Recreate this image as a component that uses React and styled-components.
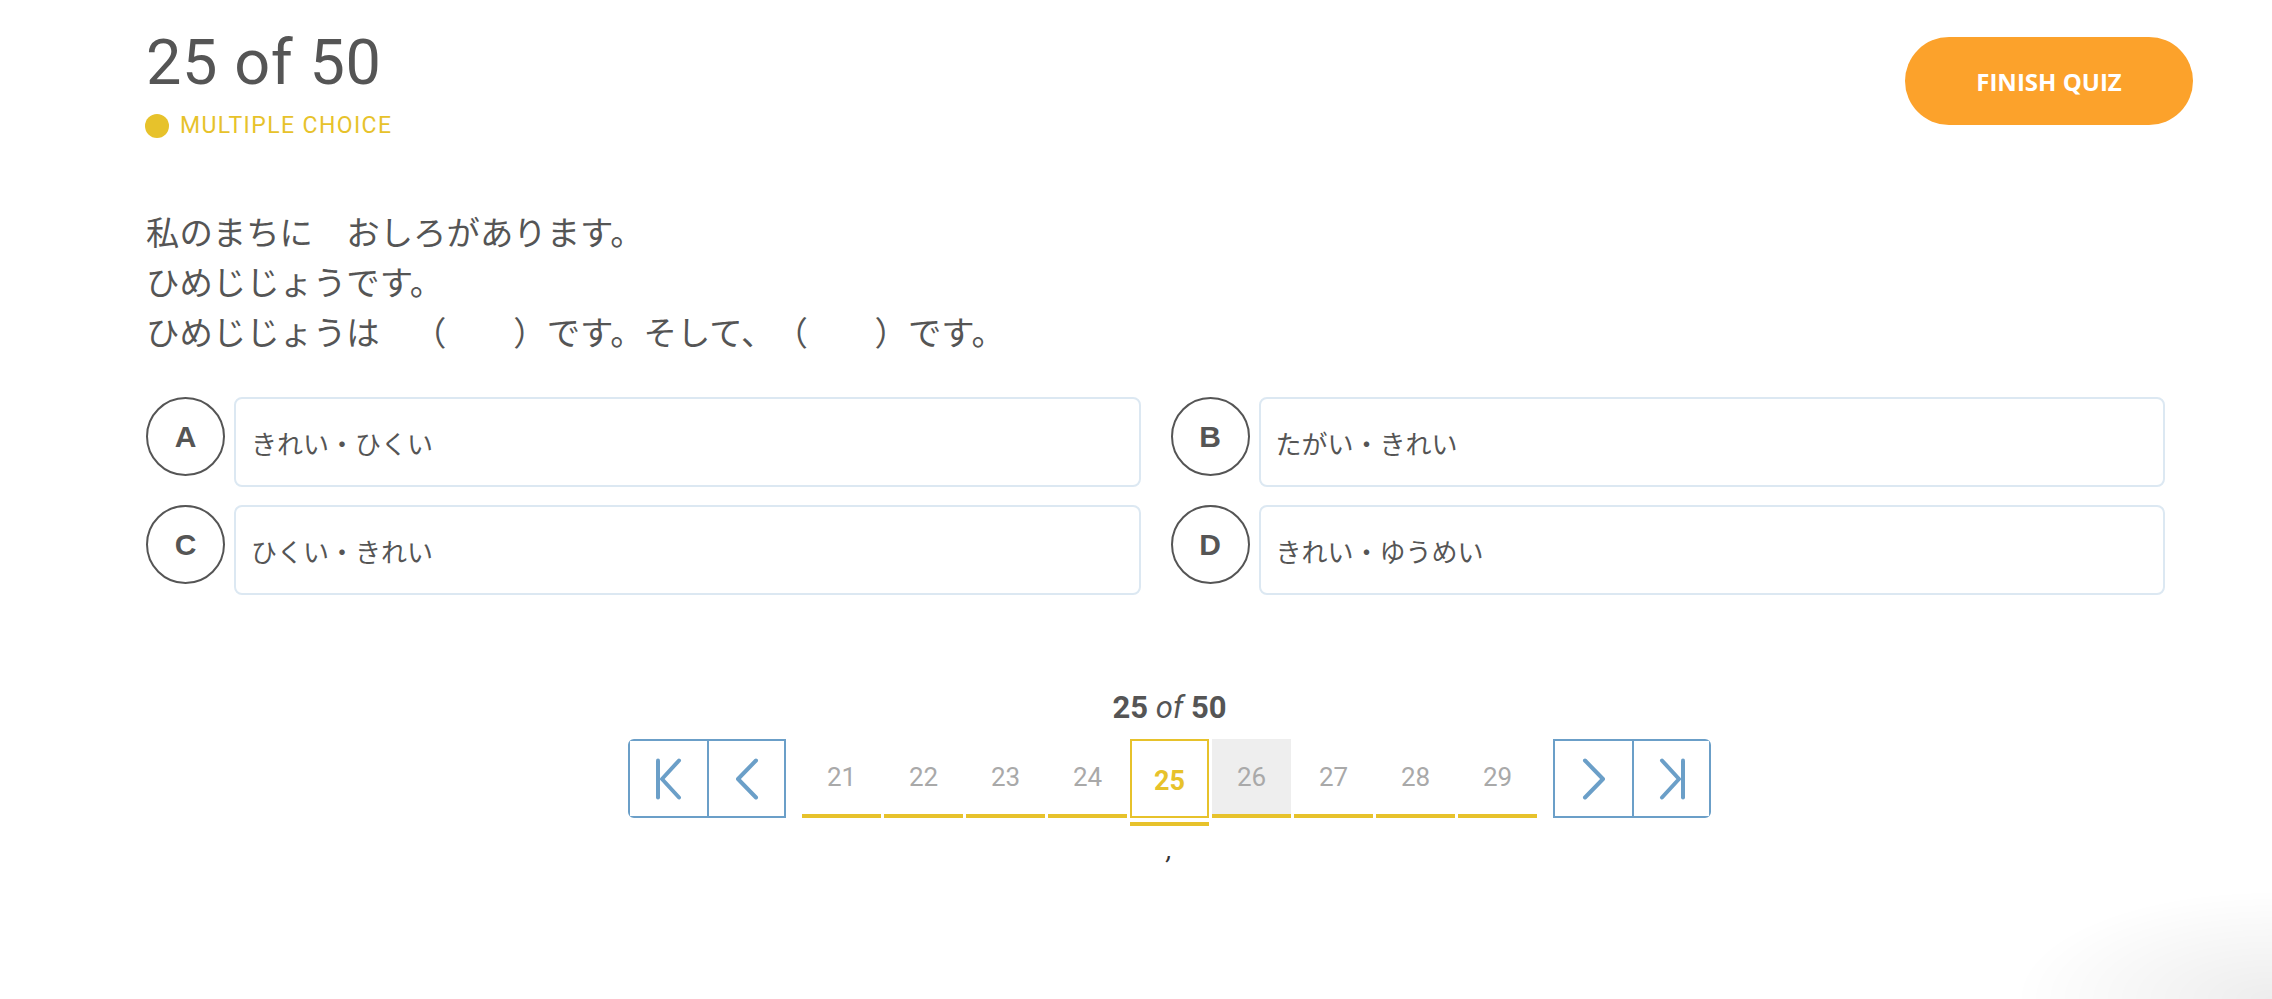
import React from "react";
import styled, { createGlobalStyle, css } from "styled-components";

const options = [
  { letter: "A", text: "きれい・ひくい" },
  { letter: "B", text: "たがい・きれい" },
  { letter: "C", text: "ひくい・きれい" },
  { letter: "D", text: "きれい・ゆうめい" }
];

const pages = [21, 22, 23, 24, 25, 26, 27, 28, 29];
const current = 25;
const hovered = 26;

const GlobalStyle = createGlobalStyle`
  html, body {
    margin: 0;
    background: #fff;
  }
  body {
    font-family: Roboto, "Noto Sans CJK JP", sans-serif;
    color: #555;
  }
`;

// little drawings for the pager buttons
const FirstIcon = () => (
  <svg width="28" height="42" viewBox="0 0 28 42" fill="none" stroke="#6b9fc8" strokeWidth="4" strokeLinecap="round" strokeLinejoin="round">
    <path d="M3 2.5 V39.5" />
    <path d="M24 2.5 L7 21 L24 39.5" />
  </svg>
);
const PrevIcon = () => (
  <svg width="28" height="42" viewBox="0 0 28 42" fill="none" stroke="#6b9fc8" strokeWidth="4" strokeLinecap="round" strokeLinejoin="round">
    <path d="M23 2.5 L5 21 L23 39.5" />
  </svg>
);
const NextIcon = () => (
  <svg width="28" height="42" viewBox="0 0 28 42" fill="none" stroke="#6b9fc8" strokeWidth="4" strokeLinecap="round" strokeLinejoin="round">
    <path d="M5 2.5 L23 21 L5 39.5" />
  </svg>
);
const LastIcon = () => (
  <svg width="28" height="42" viewBox="0 0 28 42" fill="none" stroke="#6b9fc8" strokeWidth="4" strokeLinecap="round" strokeLinejoin="round">
    <path d="M4 2.5 L21 21 L4 39.5" />
    <path d="M25 2.5 V39.5" />
  </svg>
);

const App = () => {
  return (
    <Page>
      <GlobalStyle />
      <Header>
        <TitleBlock>
          <Title>25 of 50</Title>
          <TypeTag>
            <Dot />
            MULTIPLE CHOICE
          </TypeTag>
        </TitleBlock>
        <FinishButton>FINISH QUIZ</FinishButton>
      </Header>

      <Question>
        <p>私のまちに　おしろがあります。</p>
        <p>ひめじじょうです。</p>
        <p>ひめじじょうは　（　　）です。そして、（　　）です。</p>
      </Question>

      <Options>
        {options.map((o) => (
          <Option key={o.letter}>
            <Letter>{o.letter}</Letter>
            <AnswerBox>{o.text}</AnswerBox>
          </Option>
        ))}
      </Options>

      <Pager>
        <PagerLabel>
          25 <em>of</em> 50
        </PagerLabel>
        <PagerRow>
          <NavGroup side="left">
            <NavButton><FirstIcon /></NavButton>
            <NavButton><PrevIcon /></NavButton>
          </NavGroup>
          <PageList>
            {pages.map((n) => (
              <PageCell key={n}>
                <PageNumber active={n === current} shaded={n === hovered}>
                  {n}
                </PageNumber>
                <PageBar active={n === current} />
              </PageCell>
            ))}
          </PageList>
          <NavGroup side="right">
            <NavButton><NextIcon /></NavButton>
            <NavButton><LastIcon /></NavButton>
          </NavGroup>
        </PagerRow>
        <Comma>,</Comma>
      </Pager>

      <CornerShade />
    </Page>
  );
};

const Page = styled.div`
  min-height: 999px;
  box-sizing: border-box;
  padding: 0 79px 0 146px;
`;

const Header = styled.div`
  display: flex;
  justify-content: space-between;
  align-items: flex-start;
`;

const TitleBlock = styled.div`
  padding-top: 26px;
`;

const Title = styled.h1`
  margin: 0;
  font-size: 63px;
  font-weight: 400;
  line-height: 73px;
  color: #555;
  letter-spacing: 0.6px;
`;

const TypeTag = styled.div`
  margin-top: 13px;
  display: flex;
  align-items: center;
  gap: 11px;
  font-size: 23px;
  line-height: 28px;
  letter-spacing: 1.4px;
  color: #e7c22b;
`;

const Dot = styled.span`
  width: 24px;
  height: 24px;
  border-radius: 50%;
  background: #e7c22b;
  margin-left: -1px;
`;

const FinishButton = styled.button`
  margin-top: 37px;
  width: 288px;
  height: 88px;
  border: none;
  border-radius: 44px;
  background: #fca22b;
  color: #fff;
  font-family: "Open Sans", sans-serif;
  font-weight: 700;
  font-size: 24px;
  cursor: pointer;
`;

const Question = styled.div`
  margin-top: 66px;
  font-family: "Noto Sans CJK JP", sans-serif;
  font-size: 33.4px;
  line-height: 50px;
  color: #555;
  text-spacing-trim: space-all;

  p {
    margin: 0;
  }
`;

const Options = styled.div`
  margin: 41px 28px 0 0;
  display: grid;
  grid-template-columns: 1fr 1fr;
  column-gap: 30px;
  row-gap: 18px;
`;

const Option = styled.div`
  display: flex;
  align-items: flex-start;
  gap: 9px;
`;

const Letter = styled.div`
  flex: none;
  width: 79px;
  height: 79px;
  box-sizing: border-box;
  border: 2px solid #555;
  border-radius: 50%;
  display: flex;
  align-items: center;
  justify-content: center;
  font-family: "Liberation Sans", Arial, sans-serif;
  font-weight: 700;
  font-size: 30px;
  color: #555;
`;

const AnswerBox = styled.div`
  flex: 1;
  height: 90px;
  box-sizing: border-box;
  border: 2px solid #dce8f2;
  border-radius: 8px;
  padding-left: 15px;
  display: flex;
  align-items: center;
  font-family: "Noto Sans CJK JP", sans-serif;
  font-size: 26px;
  color: #555;
  text-spacing-trim: space-all;
`;

const Pager = styled.div`
  margin-top: 96px;
  display: flex;
  flex-direction: column;
  align-items: center;
`;

const PagerLabel = styled.div`
  font-size: 31px;
  line-height: 34px;
  font-weight: 700;
  color: #555;

  em {
    font-weight: 400;
  }
`;

const PagerRow = styled.div`
  margin-top: 14px;
  display: flex;
  align-items: flex-start;
  gap: 16px;
`;

const NavGroup = styled.div`
  display: flex;
  border: 2px solid #6b9fc8;
  border-radius: ${(p) => (p.side === "left" ? "6px 0 0 6px" : "0 6px 6px 0")};
`;

const NavButton = styled.button`
  width: 77px;
  height: 75px;
  padding: 0;
  border: none;
  background: #fff;
  display: flex;
  align-items: center;
  justify-content: center;
  cursor: pointer;

  & + & {
    border-left: 2px solid #6b9fc8;
  }
`;

const PageList = styled.div`
  display: flex;
  gap: 3px;
`;

const PageCell = styled.div`
  width: 79px;
  display: flex;
  flex-direction: column;
`;

const PageNumber = styled.div`
  height: 75px;
  box-sizing: border-box;
  display: flex;
  align-items: center;
  justify-content: center;
  font-size: 26px;
  color: #a9a9a9;
  background: ${(p) => (p.shaded ? "#eeeeee" : "transparent")};

  ${(p) =>
    p.active &&
    css`
      height: 79px;
      border: 2px solid #e7c22b;
      color: #e7c22b;
      font-weight: 700;
      font-size: 27px;
      padding-top: 4px;
    `}
`;

const PageBar = styled.div`
  height: 4px;
  background: #e7c22b;
  margin-top: ${(p) => (p.active ? "4px" : "0")};
`;

const Comma = styled.div`
  margin-top: 9px;
  font-size: 26px;
  line-height: 30px;
  font-style: italic;
  color: #333;
`;

const CornerShade = styled.div`
  position: fixed;
  right: 0;
  bottom: 0;
  width: 260px;
  height: 110px;
  pointer-events: none;
  background: radial-gradient(ellipse at 100% 100%, rgba(0, 0, 0, 0.07), rgba(0, 0, 0, 0) 70%);
`;

export default App;
